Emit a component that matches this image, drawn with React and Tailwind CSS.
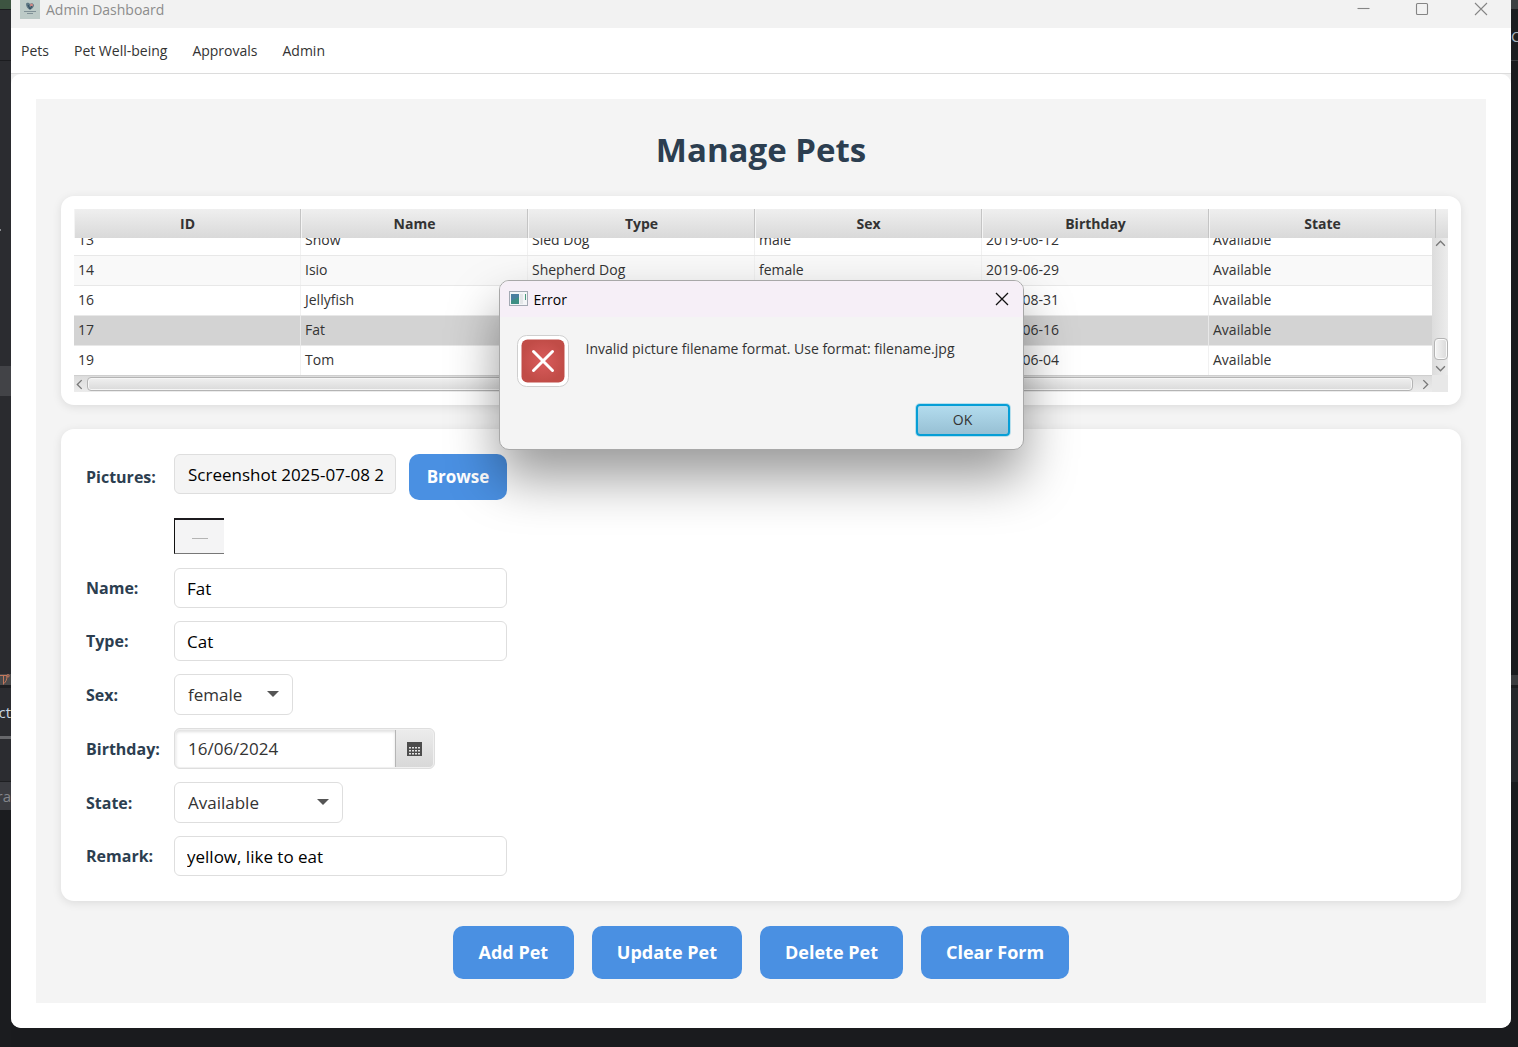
import React from "react";

const COLUMNS = ["ID", "Name", "Type", "Sex", "Birthday", "State"];

const PETS = [
  ["13", "Snow", "Sled Dog", "male", "2019-06-12", "Available"],
  ["14", "Isio", "Shepherd Dog", "female", "2019-06-29", "Available"],
  ["16", "Jellyfish", "Jellyfish", "male", "2022-08-31", "Available"],
  ["17", "Fat", "Cat", "female", "2024-06-16", "Available"],
  ["19", "Tom", "Cat", "male", "2023-06-04", "Available"],
];

const SELECTED_ID = "17";

const GRID = "grid grid-cols-[repeat(6,minmax(0,1fr))_12px]";

const FIELD =
  "h-10 w-full rounded-md border border-[#dedede] bg-white px-3 text-[17px] text-black outline-none";

function Chevron({ d, className }) {
  return (
    <svg viewBox="0 0 10 10" className={className} fill="none" stroke="#777" strokeWidth="1.2" aria-hidden="true">
      <path d={d} />
    </svg>
  );
}

function LeftBackdrop() {
  return (
    <div className="flex w-[11px] shrink-0 flex-col overflow-hidden bg-[#1b1c1f] text-[15px]" aria-hidden="true">
      <div className="h-[9px] bg-[#3d5441]" />
      <div className="h-[52px] border-y border-[#1b1c1f] bg-[#2b2c30]" />
      <div className="h-[305px] bg-[#2b2c30] pt-[168px]">
        <div className="h-[2px] w-px bg-[#8a8c90]" />
      </div>
      <div className="h-[30px] bg-[#424347]" />
      <div className="h-[278px] bg-[#2a2b2f]" />
      <div className="flex h-[11px] items-center overflow-hidden bg-[#4a4a4b]">
        <svg viewBox="0 0 10 11" className="h-[11px] w-[10px]" fill="none" stroke="#c4775b" strokeWidth="1">
          <path d="M0 1.500h7c0 4-1 6-3 8M3.500 1.500v9" />
          <circle cx="8" cy="1.800" r="1.200" />
        </svg>
      </div>
      <div className="h-[3px] bg-[#1e1f22]" />
      <div className="flex h-[48px] items-center justify-end bg-[#2b2c30] text-[#c8d8e4]">
        <span>ct</span>
      </div>
      <div className="h-[3px] bg-[#67686b]" />
      <div className="h-[43px] border-b border-[#1e1f22] bg-[#2b2c30]" />
      <div className="flex h-[28px] items-center justify-end bg-[#3b3c41] text-[#84868c]">
        <span>ra</span>
      </div>
    </div>
  );
}

function RightBackdrop() {
  return (
    <div className="flex w-[7px] shrink-0 flex-col overflow-hidden bg-[#1a1b1e] text-[15px]" aria-hidden="true">
      <div className="h-[9px] bg-[#3c4042]" />
      <div className="flex h-[51px] items-center bg-[#1b1d20] pt-1 text-[#a9b4bf]">
        <span>C</span>
      </div>
      <div className="h-px bg-[#3a3c40]" />
      <div className="h-[614px] bg-[#1a1b1e]" />
      <div className="h-[10px] bg-[#3a3b3e]" />
      <div className="h-[3px] bg-[#1a1b1e]" />
      <div className="h-[94px] bg-[#25272b]" />
    </div>
  );
}

function TitleBar() {
  return (
    <header className="flex h-7 items-start justify-between bg-[#f2f2f2]">
      <div className="flex items-start gap-[6px] pl-[9px]">
        <svg viewBox="0 0 20 19" className="h-[19px] w-5" aria-hidden="true">
          <rect width="20" height="19" fill="#bccac7" />
          <path d="M6 4c1-2 3-1 4 0 1-1 3-1 4 1 0 2-2 4-4 5-2-1-4-3-4-6z" fill="#5d7683" />
          <circle cx="11.500" cy="5" r="1.500" fill="#d08a86" />
          <path d="M8 5l2 4 2-3" stroke="#2f4a5e" strokeWidth="1" fill="none" />
          <path d="M4 11.500h12M7 13.500h6" stroke="#7f9096" strokeWidth="1" />
        </svg>
        <span className="text-[14px] leading-5 text-[#8c8c8c]">Admin Dashboard</span>
      </div>
      <div className="flex pr-px">
        {[
          ["Minimize", "M4.500 8.500h12"],
          ["Maximize", "M5.500 3.500h9a1 1 0 0 1 1 1v9a1 1 0 0 1-1 1h-9a1 1 0 0 1-1-1v-9a1 1 0 0 1 1-1z"],
          ["Close", "M4 3l12 12M16 3L4 15"],
        ].map(([label, d]) => (
          <button key={label} type="button" aria-label={label} className="flex w-[59px] justify-center">
            <svg viewBox="0 0 20 20" className="h-5 w-5" fill="none" stroke="#858585" strokeWidth="1.1">
              <path d={d} />
            </svg>
          </button>
        ))}
      </div>
    </header>
  );
}

function PetTable() {
  return (
    <section className="rounded-[13px] bg-white p-[13px] shadow-[0_2px_10px_rgba(0,0,0,0.1)]">
      <div className="flex">
        <table className="block w-full text-[14px] text-[#333]">
          <thead className="block">
            <tr className={`${GRID} h-[29px] bg-linear-to-b from-[#efefef] to-[#d9d9d9]`}>
              {COLUMNS.map((name) => (
                <th
                  key={name}
                  scope="col"
                  className="flex items-center justify-center border-r border-[#c4c4c4] pl-px font-bold shadow-[inset_1px_0_0_#f4f4f4]"
                >
                  {name}
                </th>
              ))}
            </tr>
          </thead>
          <tbody className="flex h-[137px] flex-col justify-end overflow-hidden">
            {PETS.map((pet, i) => {
              const tone =
                pet[0] === SELECTED_ID ? "bg-[#d3d3d3]" : i % 2 === 1 ? "bg-[#f9f9f9]" : "bg-white";
              return (
                <tr key={pet[0]} className={`${GRID} h-[30px] shrink-0 border-t border-[#e8e8e8] ${tone}`}>
                  {pet.map((value, c) => (
                    <td key={c} className="flex items-center border-r border-[#ededed]/80 pb-[2px] pl-1">
                      {value}
                    </td>
                  ))}
                </tr>
              );
            })}
          </tbody>
        </table>
        <div className="mt-[29px] -ml-4 flex w-4 shrink-0 flex-col items-center bg-linear-to-r from-[#dcdcdc] to-[#ececec] pl-px">
          <Chevron d="M1 7l4-4 4 4" className="h-[11px] w-[11px]" />
          <div className="flex-1" />
          <div className="h-[22px] w-[14px] rounded-[4px] border border-[#b4b4b4] bg-linear-to-r from-[#f4f4f4] to-[#dadada] shadow-[inset_0_0_0_1px_#fafafa]" />
          <Chevron d="M1 3l4 4 4-4" className="mt-[3px] mb-px h-[11px] w-[11px]" />
        </div>
      </div>
      <div className="flex h-[17px] bg-[#e8e8e8]">
        <div className="flex flex-1 items-center border-t border-[#cfcfcf] bg-linear-to-b from-[#dcdcdc] to-[#ececec]">
          <Chevron d="M7 1l-4 4 4 4" className="mr-[2px] h-[11px] w-[11px]" />
          <div className="h-[14px] flex-1 rounded-[4px] border border-[#b4b4b4] bg-linear-to-b from-[#f0f0f0] to-[#dadada] shadow-[inset_0_0_0_1px_#f6f6f6]" />
          <Chevron d="M3 1l4 4-4 4" className="mr-px ml-[7px] h-[11px] w-[11px]" />
        </div>
        <div className="w-4" />
      </div>
    </section>
  );
}

function Label({ htmlFor, children }) {
  return (
    <label htmlFor={htmlFor} className="text-[16px] leading-6 font-bold whitespace-nowrap text-[#2c3e50]">
      {children}
    </label>
  );
}

function SelectBox({ id, value, options, className }) {
  return (
    <div className={`relative ${className}`}>
      <select
        id={id}
        defaultValue={value}
        className="h-[41px] w-full appearance-none rounded-md border border-[#dedede] bg-white pl-[13px] text-[17px] text-[#333] outline-none"
      >
        {options.map((o) => (
          <option key={o}>{o}</option>
        ))}
      </select>
      <svg viewBox="0 0 12 6" className="pointer-events-none absolute top-[17px] right-[14px] h-[6px] w-3" aria-hidden="true">
        <path d="M0 0h12L6 6z" fill="#555" />
      </svg>
    </div>
  );
}

function CalendarIcon() {
  const dots = [];
  for (let y = 0; y < 3; y++) for (let x = 0; x < 4; x++) dots.push([2 + x * 3, 5 + y * 3]);
  return (
    <svg viewBox="0 0 15 14" className="h-[14px] w-[15px]" aria-hidden="true">
      <rect width="15" height="14" fill="#4d4d4d" />
      {dots.map(([x, y]) => (
        <rect key={`${x}-${y}`} x={x} y={y} width="2" height="1.500" fill="#e4e4e4" />
      ))}
    </svg>
  );
}

function PetForm() {
  return (
    <form
      onSubmit={(e) => e.preventDefault()}
      className="grid grid-cols-[75px_333px] items-center gap-[13px] rounded-[13px] bg-white p-[25px] shadow-[0_2px_10px_rgba(0,0,0,0.1)]"
    >
      <Label htmlFor="pictures">Pictures:</Label>
      <div className="flex items-start gap-[13px]">
        <input
          id="pictures"
          readOnly
          defaultValue="Screenshot 2025-07-08 205512.png"
          className="h-10 min-w-0 flex-1 rounded-md border border-[#dedede] bg-[#f4f4f4] pr-[11px] pl-[13px] text-[17px] text-black outline-none"
        />
        <button type="button" className="h-[46px] w-[98px] rounded-[10px] bg-[#4a90e2] text-[17px] font-bold text-white">
          Browse
        </button>
      </div>

      <div className="col-start-2 flex h-[42px] items-end pb-px">
        <div className="flex h-9 w-[50px] items-center justify-center border-t-2 border-b border-l border-t-[#1c1a1e] border-b-[#777] border-l-[#111] bg-[#f4f4f5] pt-1">
          <div className="h-px w-4 bg-[#b4b4b4]" />
        </div>
      </div>

      <Label htmlFor="name">Name:</Label>
      <input id="name" defaultValue="Fat" className={FIELD} />

      <Label htmlFor="type">Type:</Label>
      <input id="type" defaultValue="Cat" className={FIELD} />

      <Label htmlFor="sex">Sex:</Label>
      <SelectBox id="sex" value="female" options={["female", "male"]} className="w-[119px]" />

      <Label htmlFor="birthday">Birthday:</Label>
      <div className="flex h-[41px] w-[261px] rounded-md border border-[#dedede] bg-[#f0f0f0] p-px">
        <input
          id="birthday"
          defaultValue="16/06/2024"
          className="min-w-0 flex-1 rounded-l-[4px] border-r border-[#b5b5b5] bg-white pl-3 text-[17px] text-[#333] shadow-[inset_0_2px_3px_rgba(0,0,0,0.12)] outline-none"
        />
        <button
          type="button"
          aria-label="Choose date"
          className="flex w-[37px] items-center justify-center rounded-r-[4px] bg-linear-to-b from-[#ececec] to-[#d8d8d8]"
        >
          <CalendarIcon />
        </button>
      </div>

      <Label htmlFor="state">State:</Label>
      <SelectBox id="state" value="Available" options={["Available", "Adopted"]} className="w-[169px]" />

      <Label htmlFor="remark">Remark:</Label>
      <input id="remark" defaultValue="yellow, like to eat" className={FIELD} />
    </form>
  );
}

function ErrorDialog() {
  return (
    <div className="pointer-events-none absolute inset-x-0 top-[280px] flex justify-center">
      <div
        role="alertdialog"
        aria-labelledby="dialog-title"
        aria-describedby="dialog-text"
        className="pointer-events-auto w-[525px] overflow-hidden rounded-[10px] border border-[#a8a8a8] bg-[#f4f4f4] shadow-[0_28px_52px_rgba(0,0,0,0.4)]"
      >
        <div className="flex h-9 items-center bg-[#f6eff7] pr-[14px] pl-[9px]">
          <svg viewBox="0 0 19 16" className="mr-[6px] h-4 w-[19px]" aria-hidden="true">
            <rect x="0.500" y="0.500" width="18" height="14" fill="#f3f5f7" stroke="#a3a9b3" />
            <rect x="2" y="3" width="8" height="10" fill="#3d8f83" />
            <path d="M2 3h8v3l-8 4z" fill="#4a7f9f" />
            <path d="M11 3h3v10h-3z" fill="#e3e6e8" />
            <path d="M16 3h1v6h-1z" fill="#4a9a7c" />
          </svg>
          <h2 id="dialog-title" className="flex-1 text-[14px] text-black">
            Error
          </h2>
          <button type="button" aria-label="Close dialog">
            <svg viewBox="0 0 14 14" className="h-[14px] w-[14px]" fill="none" stroke="#111" strokeWidth="1.3">
              <path d="M1 1l12 12M13 1L1 13" />
            </svg>
          </button>
        </div>
        <div className="flex gap-[17px] px-[17px] pt-[18px]">
          <svg viewBox="0 0 52 52" className="h-[52px] w-[52px] shrink-0" aria-hidden="true">
            <defs>
              <radialGradient id="error-red">
                <stop offset="0" stopColor="#d95c5c" />
                <stop offset="1" stopColor="#c14c47" />
              </radialGradient>
            </defs>
            <rect x="0.500" y="0.500" width="51" height="51" rx="9" fill="#fff" stroke="#cfcfcf" />
            <rect x="4.500" y="4.500" width="43" height="43" rx="6" fill="url(#error-red)" />
            <path d="M16.500 16.500l19 19M35.500 16.500l-19 19" stroke="#fff" strokeWidth="3" strokeLinecap="round" />
          </svg>
          <p id="dialog-text" className="pt-1 text-[14px] leading-5 text-[#333]">
            Invalid picture filename format. Use format: filename.jpg
          </p>
        </div>
        <div className="flex justify-end p-[13px] pt-[17px]">
          <button
            type="button"
            className="h-8 w-[94px] rounded-[4px] border-2 border-[#069ed6] bg-linear-to-b from-[#b3dcee] to-[#97c0d4] pb-[2px] text-[14px] text-[#333] shadow-[0_0_0_1px_rgba(3,158,211,0.25)]"
          >
            OK
          </button>
        </div>
      </div>
    </div>
  );
}

export default function App() {
  return (
    <div className="flex min-h-screen bg-[#1a1b1e] font-['Open_Sans',sans-serif]">
      <LeftBackdrop />
      <div className="relative min-w-0 flex-1">
        <div className="overflow-hidden rounded-b-[10px] bg-[#f0f0f0]">
          <TitleBar />
          <nav className="flex h-[46px] items-center gap-[25px] border-b border-[#dcdcdc] bg-white pl-[10px] text-[#333]">
            {["Pets", "Pet Well-being", "Approvals", "Admin"].map((item) => (
              <a key={item} href="#" className="text-[14px]">
                {item}
              </a>
            ))}
          </nav>
          <div className="rounded-t-[10px] bg-white p-[25px]">
            <main className="flex flex-col gap-6 bg-[#f4f4f4] px-[25px] pt-[25px] pb-6">
              <h1 className="h-12 text-center text-[33px] leading-[52px] font-bold text-[#2c3e50]">Manage Pets</h1>
              <PetTable />
              <PetForm />
              <div className="flex justify-center gap-[18px] pt-px">
                {["Add Pet", "Update Pet", "Delete Pet", "Clear Form"].map((name) => (
                  <button
                    key={name}
                    type="button"
                    className="h-[53px] min-w-[121px] rounded-[10px] bg-[#4a90e2] px-[25px] text-[18px] font-bold text-white"
                  >
                    {name}
                  </button>
                ))}
              </div>
            </main>
          </div>
        </div>
        <ErrorDialog />
      </div>
      <RightBackdrop />
    </div>
  );
}
